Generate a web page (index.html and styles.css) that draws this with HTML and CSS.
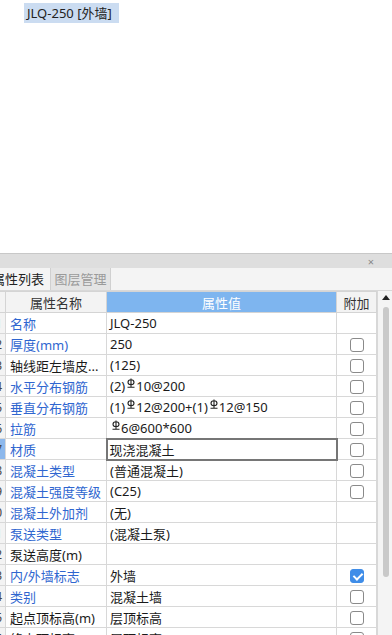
FILE: index.html
```html
<!DOCTYPE html>
<html lang="zh-CN">
<head>
    <meta charset="UTF-8">
    <title>属性列表</title>
    <link rel="stylesheet" href="styles.css">
</head>
<body>
    <div class="canvas">
        <span class="tag">JLQ-250 [外墙]</span>
    </div>
    <div class="panel">
        <div class="titlebar"><span class="close">×</span></div>
        <div class="tabs">
            <span class="tab active">属性列表</span>
            <span class="tab">图层管理</span>
        </div>
        <div class="grid">
            <table class="props">
                <colgroup>
                    <col class="c-num">
                    <col class="c-name">
                    <col class="c-val">
                    <col class="c-add">
                </colgroup>
                <thead>
                    <tr>
                        <th class="num"></th>
                        <th>属性名称</th>
                        <th class="hl">属性值</th>
                        <th>附加</th>
                    </tr>
                </thead>
                <tbody>
                    <tr><td class="num"><span>1</span></td><td class="blue">名称</td><td>JLQ-250</td><td></td></tr>
                    <tr><td class="num"><span>2</span></td><td class="blue">厚度(mm)</td><td>250</td><td><i class="box"></i></td></tr>
                    <tr><td class="num"><span>3</span></td><td>轴线距左墙皮...</td><td>(125)</td><td><i class="box"></i></td></tr>
                    <tr><td class="num"><span>4</span></td><td class="blue">水平分布钢筋</td><td>(2)<svg class="bar" viewBox="0 0 8 10"><path d="M4 0.5V9.5M1 4.2C1 2.6 2.3 1.8 4 1.8S7 2.6 7 4.2 5.7 6.6 4 6.6 1 5.8 1 4.2ZM0.5 9.3H7.5"/></svg>10@200</td><td><i class="box"></i></td></tr>
                    <tr><td class="num"><span>5</span></td><td class="blue">垂直分布钢筋</td><td>(1)<svg class="bar" viewBox="0 0 8 10"><path d="M4 0.5V9.5M1 4.2C1 2.6 2.3 1.8 4 1.8S7 2.6 7 4.2 5.7 6.6 4 6.6 1 5.8 1 4.2ZM0.5 9.3H7.5"/></svg>12@200+(1)<svg class="bar" viewBox="0 0 8 10"><path d="M4 0.5V9.5M1 4.2C1 2.6 2.3 1.8 4 1.8S7 2.6 7 4.2 5.7 6.6 4 6.6 1 5.8 1 4.2ZM0.5 9.3H7.5"/></svg>12@150</td><td><i class="box"></i></td></tr>
                    <tr><td class="num"><span>6</span></td><td class="blue">拉筋</td><td><svg class="bar" viewBox="0 0 8 10"><path d="M4 0.5V9.5M1 4.2C1 2.6 2.3 1.8 4 1.8S7 2.6 7 4.2 5.7 6.6 4 6.6 1 5.8 1 4.2ZM0.5 9.3H7.5"/></svg>6@600*600</td><td><i class="box"></i></td></tr>
                    <tr class="sel"><td class="num"><span>7</span></td><td class="blue">材质</td><td class="edit">现浇混凝土</td><td><i class="box"></i></td></tr>
                    <tr><td class="num"><span>8</span></td><td class="blue">混凝土类型</td><td>(普通混凝土)</td><td><i class="box"></i></td></tr>
                    <tr><td class="num"><span>9</span></td><td class="blue">混凝土强度等级</td><td>(C25)</td><td><i class="box"></i></td></tr>
                    <tr><td class="num"><span>10</span></td><td class="blue">混凝土外加剂</td><td>(无)</td><td></td></tr>
                    <tr><td class="num"><span>11</span></td><td class="blue">泵送类型</td><td>(混凝土泵)</td><td></td></tr>
                    <tr><td class="num"><span>12</span></td><td>泵送高度(m)</td><td></td><td></td></tr>
                    <tr><td class="num"><span>13</span></td><td class="blue">内/外墙标志</td><td>外墙</td><td><i class="box on"></i></td></tr>
                    <tr><td class="num"><span>14</span></td><td class="blue">类别</td><td>混凝土墙</td><td><i class="box"></i></td></tr>
                    <tr><td class="num"><span>15</span></td><td>起点顶标高(m)</td><td>层顶标高</td><td><i class="box"></i></td></tr>
                    <tr><td class="num"><span>16</span></td><td>终点顶标高(m)</td><td>层顶标高</td><td><i class="box"></i></td></tr>
                </tbody>
            </table>
            <div class="scroll">
                <span class="arrow"></span>
                <span class="thumb"></span>
            </div>
        </div>
    </div>
</body>
</html>
```

FILE: styles.css
```css
*{
    margin: 0;
    padding: 0;
    box-sizing: border-box;
}
body{
    width: 392px;
    height: 635px;
    overflow: hidden;
    background: #fff;
    font-family: "Noto Sans", "Noto Sans CJK SC", sans-serif;
    font-size: 13px;
    color: #1a1a1a;
}
.canvas{
    height: 253px;
    padding: 3px 0 0 24px;
}
.tag{
    display: inline-block;
    background: #cbdcf1;
    padding: 0 3px;
    width: 95px;
    line-height: 20px;
    color: #222;
}
.panel{
    width: 405px;
    margin-left: -13px;
}
.titlebar{
    height: 15px;
    border-top: 1px solid #c8c8c8;
    background: #dedede;
    display: flex;
    justify-content: flex-end;
    align-items: center;
    padding-right: 18px;
}
.close{
    font-size: 11px;
    line-height: 11px;
    color: #888;
}
.tabs{
    height: 23px;
    display: flex;
    background: #f4f4f4;
    border-bottom: 1px solid #d8d8d8;
}
.tab{
    line-height: 22px;
    width: 61px;
    text-align: center;
    font-size: 13px;
    color: #9a9a9a;
    background: #e4e4e4;
    border-left: 1px solid #d0d0d0;
    border-right: 1px solid #d0d0d0;
    margin-left: 1px;
}
.tab.active{
    width: 62px;
    margin-left: 0;
    border: 0;
    padding-left: 5px;
    text-align: left;
    color: #222;
    background: #f4f4f4;
}
.grid{
    display: flex;
}
.props{
    width: 389px;
    border-collapse: collapse;
    table-layout: fixed;
}
.c-num{ width: 18px; }
.c-name{ width: 101px; }
.c-val{ width: 230px; }
.c-add{ width: 40px; }
.props th{
    height: 21px;
    font-weight: normal;
    background: #f3f3f3;
    border: 1px solid #d4d4d4;
    color: #333;
}
.props th.hl{
    background: #7eb5ef;
    color: #fff;
}
.props td{
    height: 21px;
    border: 1px solid #d8d8d8;
    padding: 0 3px;
    white-space: nowrap;
    overflow: hidden;
    text-overflow: clip;
}
.props td:nth-child(2){
    padding-left: 4px;
}
.props td:last-child{
    text-align: center;
    padding: 0;
}
.props td.num{
    background: #f3f3f3;
    padding: 0;
    font-size: 12px;
    color: #444;
}
.props td.num span{
    display: flex;
    justify-content: flex-end;
    padding-right: 3px;
}
.props tr.sel td.num{
    background: #8cb8ec;
}
.props td.edit{
    border: 2px solid #767676;
    padding-left: 2px;
}
.blue{
    color: #2f66d0;
}
.bar{
    width: 8px;
    height: 10px;
    margin: 0 1px 0 2px;
    vertical-align: 3px;
    fill: none;
    stroke: #222;
    stroke-width: 1.1;
}
.box{
    display: inline-block;
    width: 14px;
    height: 14px;
    border: 1px solid #8a8a8a;
    border-radius: 3px;
    vertical-align: middle;
    position: relative;
    top: -1px;
}
.box.on{
    background: #3f8de8;
    border-color: #3f8de8;
}
.box.on::after{
    content: "";
    position: absolute;
    left: 4px;
    top: 1px;
    width: 4px;
    height: 7px;
    border: solid #fff;
    border-width: 0 2px 2px 0;
    transform: rotate(45deg);
}
.scroll{
    width: 16px;
    background: #f4f4f4;
    border-left: 1px solid #d8d8d8;
    display: flex;
    flex-direction: column;
    align-items: center;
    padding-top: 4px;
}
.arrow{
    width: 0;
    height: 0;
    border-left: 4px solid transparent;
    border-right: 4px solid transparent;
    border-bottom: 5px solid #222;
    margin-left: 1px;
}
.thumb{
    width: 6px;
    height: 270px;
    margin-top: 7px;
    margin-left: 1px;
    background: #c9c9c9;
    border-radius: 3px;
}
```
